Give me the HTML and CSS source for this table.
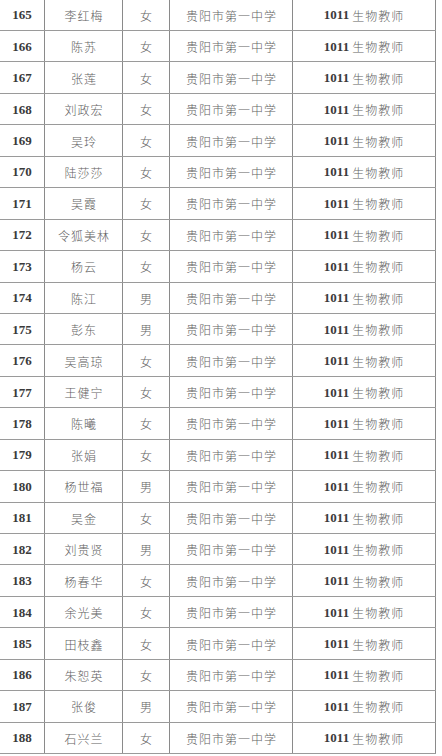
FILE: index.html
```html
<!DOCTYPE html>
<html lang="zh">
<head>
<meta charset="utf-8">
<link rel="stylesheet" href="styles.css">
</head>
<body>
<div class="table">
<div class="row"><div class="c num">165</div><div class="c zh">李红梅</div><div class="c zh">女</div><div class="c zh">贵阳市第一中学</div><div class="c job"><span class="code">1011</span> <span class="zh">生物教师</span></div></div>
<div class="row"><div class="c num">166</div><div class="c zh">陈苏</div><div class="c zh">女</div><div class="c zh">贵阳市第一中学</div><div class="c job"><span class="code">1011</span> <span class="zh">生物教师</span></div></div>
<div class="row"><div class="c num">167</div><div class="c zh">张莲</div><div class="c zh">女</div><div class="c zh">贵阳市第一中学</div><div class="c job"><span class="code">1011</span> <span class="zh">生物教师</span></div></div>
<div class="row"><div class="c num">168</div><div class="c zh">刘政宏</div><div class="c zh">女</div><div class="c zh">贵阳市第一中学</div><div class="c job"><span class="code">1011</span> <span class="zh">生物教师</span></div></div>
<div class="row"><div class="c num">169</div><div class="c zh">吴玲</div><div class="c zh">女</div><div class="c zh">贵阳市第一中学</div><div class="c job"><span class="code">1011</span> <span class="zh">生物教师</span></div></div>
<div class="row"><div class="c num">170</div><div class="c zh">陆莎莎</div><div class="c zh">女</div><div class="c zh">贵阳市第一中学</div><div class="c job"><span class="code">1011</span> <span class="zh">生物教师</span></div></div>
<div class="row"><div class="c num">171</div><div class="c zh">吴霞</div><div class="c zh">女</div><div class="c zh">贵阳市第一中学</div><div class="c job"><span class="code">1011</span> <span class="zh">生物教师</span></div></div>
<div class="row"><div class="c num">172</div><div class="c zh">令狐美林</div><div class="c zh">女</div><div class="c zh">贵阳市第一中学</div><div class="c job"><span class="code">1011</span> <span class="zh">生物教师</span></div></div>
<div class="row"><div class="c num">173</div><div class="c zh">杨云</div><div class="c zh">女</div><div class="c zh">贵阳市第一中学</div><div class="c job"><span class="code">1011</span> <span class="zh">生物教师</span></div></div>
<div class="row"><div class="c num">174</div><div class="c zh">陈江</div><div class="c zh">男</div><div class="c zh">贵阳市第一中学</div><div class="c job"><span class="code">1011</span> <span class="zh">生物教师</span></div></div>
<div class="row"><div class="c num">175</div><div class="c zh">彭东</div><div class="c zh">男</div><div class="c zh">贵阳市第一中学</div><div class="c job"><span class="code">1011</span> <span class="zh">生物教师</span></div></div>
<div class="row"><div class="c num">176</div><div class="c zh">吴高琼</div><div class="c zh">女</div><div class="c zh">贵阳市第一中学</div><div class="c job"><span class="code">1011</span> <span class="zh">生物教师</span></div></div>
<div class="row"><div class="c num">177</div><div class="c zh">王健宁</div><div class="c zh">女</div><div class="c zh">贵阳市第一中学</div><div class="c job"><span class="code">1011</span> <span class="zh">生物教师</span></div></div>
<div class="row"><div class="c num">178</div><div class="c zh">陈曦</div><div class="c zh">女</div><div class="c zh">贵阳市第一中学</div><div class="c job"><span class="code">1011</span> <span class="zh">生物教师</span></div></div>
<div class="row"><div class="c num">179</div><div class="c zh">张娟</div><div class="c zh">女</div><div class="c zh">贵阳市第一中学</div><div class="c job"><span class="code">1011</span> <span class="zh">生物教师</span></div></div>
<div class="row"><div class="c num">180</div><div class="c zh">杨世福</div><div class="c zh">男</div><div class="c zh">贵阳市第一中学</div><div class="c job"><span class="code">1011</span> <span class="zh">生物教师</span></div></div>
<div class="row"><div class="c num">181</div><div class="c zh">吴金</div><div class="c zh">女</div><div class="c zh">贵阳市第一中学</div><div class="c job"><span class="code">1011</span> <span class="zh">生物教师</span></div></div>
<div class="row"><div class="c num">182</div><div class="c zh">刘贵贤</div><div class="c zh">男</div><div class="c zh">贵阳市第一中学</div><div class="c job"><span class="code">1011</span> <span class="zh">生物教师</span></div></div>
<div class="row"><div class="c num">183</div><div class="c zh">杨春华</div><div class="c zh">女</div><div class="c zh">贵阳市第一中学</div><div class="c job"><span class="code">1011</span> <span class="zh">生物教师</span></div></div>
<div class="row"><div class="c num">184</div><div class="c zh">余光美</div><div class="c zh">女</div><div class="c zh">贵阳市第一中学</div><div class="c job"><span class="code">1011</span> <span class="zh">生物教师</span></div></div>
<div class="row"><div class="c num">185</div><div class="c zh">田枝鑫</div><div class="c zh">女</div><div class="c zh">贵阳市第一中学</div><div class="c job"><span class="code">1011</span> <span class="zh">生物教师</span></div></div>
<div class="row"><div class="c num">186</div><div class="c zh">朱恕英</div><div class="c zh">女</div><div class="c zh">贵阳市第一中学</div><div class="c job"><span class="code">1011</span> <span class="zh">生物教师</span></div></div>
<div class="row"><div class="c num">187</div><div class="c zh">张俊</div><div class="c zh">男</div><div class="c zh">贵阳市第一中学</div><div class="c job"><span class="code">1011</span> <span class="zh">生物教师</span></div></div>
<div class="row"><div class="c num">188</div><div class="c zh">石兴兰</div><div class="c zh">女</div><div class="c zh">贵阳市第一中学</div><div class="c job"><span class="code">1011</span> <span class="zh">生物教师</span></div></div>
</div>
</body>
</html>
```
FILE: styles.css
```css
html, body {
  margin: 0;
  padding: 0;
  background: #fff;
}
.table {
  width: 436px;
  margin-top: -1.45px;
  border-top: 1px solid #9a9a9a;
  display: flex;
  flex-direction: column;
}
.row {
  display: grid;
  grid-template-columns: 45px 78px 47px 123px 143px;
  height: 31.45px;
  box-sizing: border-box;
  border-bottom: 1px solid #9a9a9a;
}
.c {
  display: flex;
  align-items: center;
  justify-content: center;
  border-right: 1px solid #8a8a8a;
  box-sizing: border-box;
  white-space: nowrap;
  padding-top: 1px;
}
.num {
  font-family: "Liberation Serif", serif;
  font-weight: bold;
  font-size: 13px;
  color: #3a3a3a;
}
.zh {
  font-family: "Noto Sans CJK SC", sans-serif;
  font-size: 12px;
  letter-spacing: 1px;
  color: #626262;
  font-weight: 300;
}
.c.zh {
  padding-left: 1px;
}
.job {
  font-family: "Liberation Serif", serif;
  font-size: 13px;
}
.code {
  font-family: "Liberation Serif", serif;
  font-size: 13px;
  color: #3a3a3a;
  font-weight: bold;
  margin-right: 3px;
}
```
